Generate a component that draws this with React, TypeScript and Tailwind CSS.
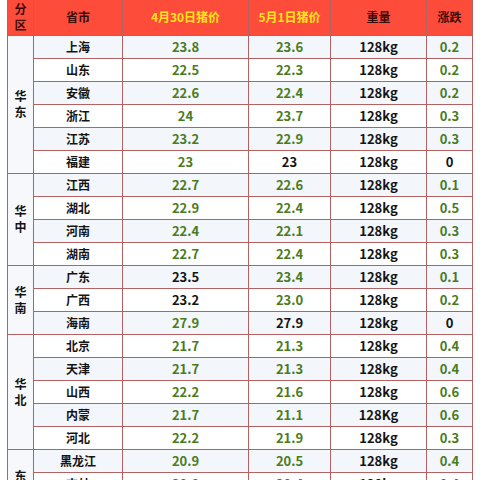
type Row = {
  city: string;
  a: string;
  b: string;
  w: string;
  d: string;
  aBlack?: boolean;
  bBlack?: boolean;
  dBlack?: boolean;
};

type Group = { region: string; rows: Row[] };

const groups: Group[] = [
  {
    region: "华东",
    rows: [
      { city: "上海", a: "23.8", b: "23.6", w: "128kg", d: "0.2" },
      { city: "山东", a: "22.5", b: "22.3", w: "128kg", d: "0.2" },
      { city: "安徽", a: "22.6", b: "22.4", w: "128kg", d: "0.2" },
      { city: "浙江", a: "24", b: "23.7", w: "128kg", d: "0.3" },
      { city: "江苏", a: "23.2", b: "22.9", w: "128kg", d: "0.3" },
      { city: "福建", a: "23", b: "23", w: "128kg", d: "0", bBlack: true, dBlack: true },
    ],
  },
  {
    region: "华中",
    rows: [
      { city: "江西", a: "22.7", b: "22.6", w: "128kg", d: "0.1" },
      { city: "湖北", a: "22.9", b: "22.4", w: "128kg", d: "0.5" },
      { city: "河南", a: "22.4", b: "22.1", w: "128kg", d: "0.3" },
      { city: "湖南", a: "22.7", b: "22.4", w: "128kg", d: "0.3" },
    ],
  },
  {
    region: "华南",
    rows: [
      { city: "广东", a: "23.5", b: "23.4", w: "128kg", d: "0.1", aBlack: true },
      { city: "广西", a: "23.2", b: "23.0", w: "128kg", d: "0.2", aBlack: true },
      { city: "海南", a: "27.9", b: "27.9", w: "128kg", d: "0", bBlack: true, dBlack: true },
    ],
  },
  {
    region: "华北",
    rows: [
      { city: "北京", a: "21.7", b: "21.3", w: "128kg", d: "0.4" },
      { city: "天津", a: "21.7", b: "21.3", w: "128kg", d: "0.4" },
      { city: "山西", a: "22.2", b: "21.6", w: "128kg", d: "0.6" },
      { city: "内蒙", a: "21.7", b: "21.1", w: "128Kg", d: "0.6" },
      { city: "河北", a: "22.2", b: "21.9", w: "128kg", d: "0.3" },
    ],
  },
  {
    region: "东北",
    rows: [
      { city: "黑龙江", a: "20.9", b: "20.5", w: "128kg", d: "0.4" },
      { city: "吉林", a: "20.8", b: "20.4", w: "128kg", d: "0.4" },
      { city: "辽宁", a: "21.0", b: "20.6", w: "128kg", d: "0.4" },
    ],
  },
];

const cell = "border border-[#b36262] text-center align-middle p-0";
const green = "text-[#4a7b1d]";
const black = "text-[#141414]";

export default function App() {
  let idx = 0;
  return (
    <div
      className="w-[480px] h-[480px] overflow-hidden bg-white pl-[7px] pr-[8px] font-bold"
      style={{ fontFamily: '"Noto Sans CJK SC", "Noto Sans", sans-serif' }}
    >
      <table className="w-[465px] border-collapse table-fixed text-[12px] leading-none">
        <colgroup>
          <col className="w-[26px]" />
          <col className="w-[89px]" />
          <col className="w-[126px]" />
          <col className="w-[82px]" />
          <col className="w-[96px]" />
          <col className="w-[46px]" />
        </colgroup>
        <thead>
          <tr className="h-[35px] bg-[#fe4c3b]">
            <th className={`${cell} border-t-0 border-[#8f2a26] text-[#3a0d0b] leading-[16px]`}>
              分<br />区
            </th>
            <th className={`${cell} border-t-0 border-[#8f2a26] text-[#3a0d0b]`}>省市</th>
            <th className={`${cell} border-t-0 border-[#8f2a26] text-[#ffe41c]`}>4月30日猪价</th>
            <th className={`${cell} border-t-0 border-[#8f2a26] text-[#ffe41c]`}>5月1日猪价</th>
            <th className={`${cell} border-t-0 border-[#8f2a26] text-[#3a0d0b]`}>重量</th>
            <th className={`${cell} border-t-0 border-[#8f2a26] text-[#3a0d0b]`}>涨跌</th>
          </tr>
        </thead>
        <tbody>
          {groups.map((g) =>
            g.rows.map((r, i) => {
              const shade = idx++ % 2 === 0 ? "bg-[#f3f6fb]" : "bg-white";
              return (
                <tr key={r.city} className={`h-[23px] ${shade}`}>
                  {i === 0 && (
                    <td
                      rowSpan={g.rows.length}
                      className={`${cell} bg-[#f6f8fc] ${black} text-[12px] leading-[16px]`}
                    >
                      {g.region[0]}
                      <br />
                      {g.region[1]}
                    </td>
                  )}
                  <td className={`${cell} ${black}`}>{r.city}</td>
                  <td className={`${cell} text-[13px] ${r.aBlack ? black : green}`}>{r.a}</td>
                  <td className={`${cell} text-[13px] ${r.bBlack ? black : green}`}>{r.b}</td>
                  <td className={`${cell} text-[13px] ${black}`}>{r.w}</td>
                  <td className={`${cell} text-[13px] ${r.dBlack ? black : green}`}>{r.d}</td>
                </tr>
              );
            })
          )}
        </tbody>
      </table>
    </div>
  );
}
